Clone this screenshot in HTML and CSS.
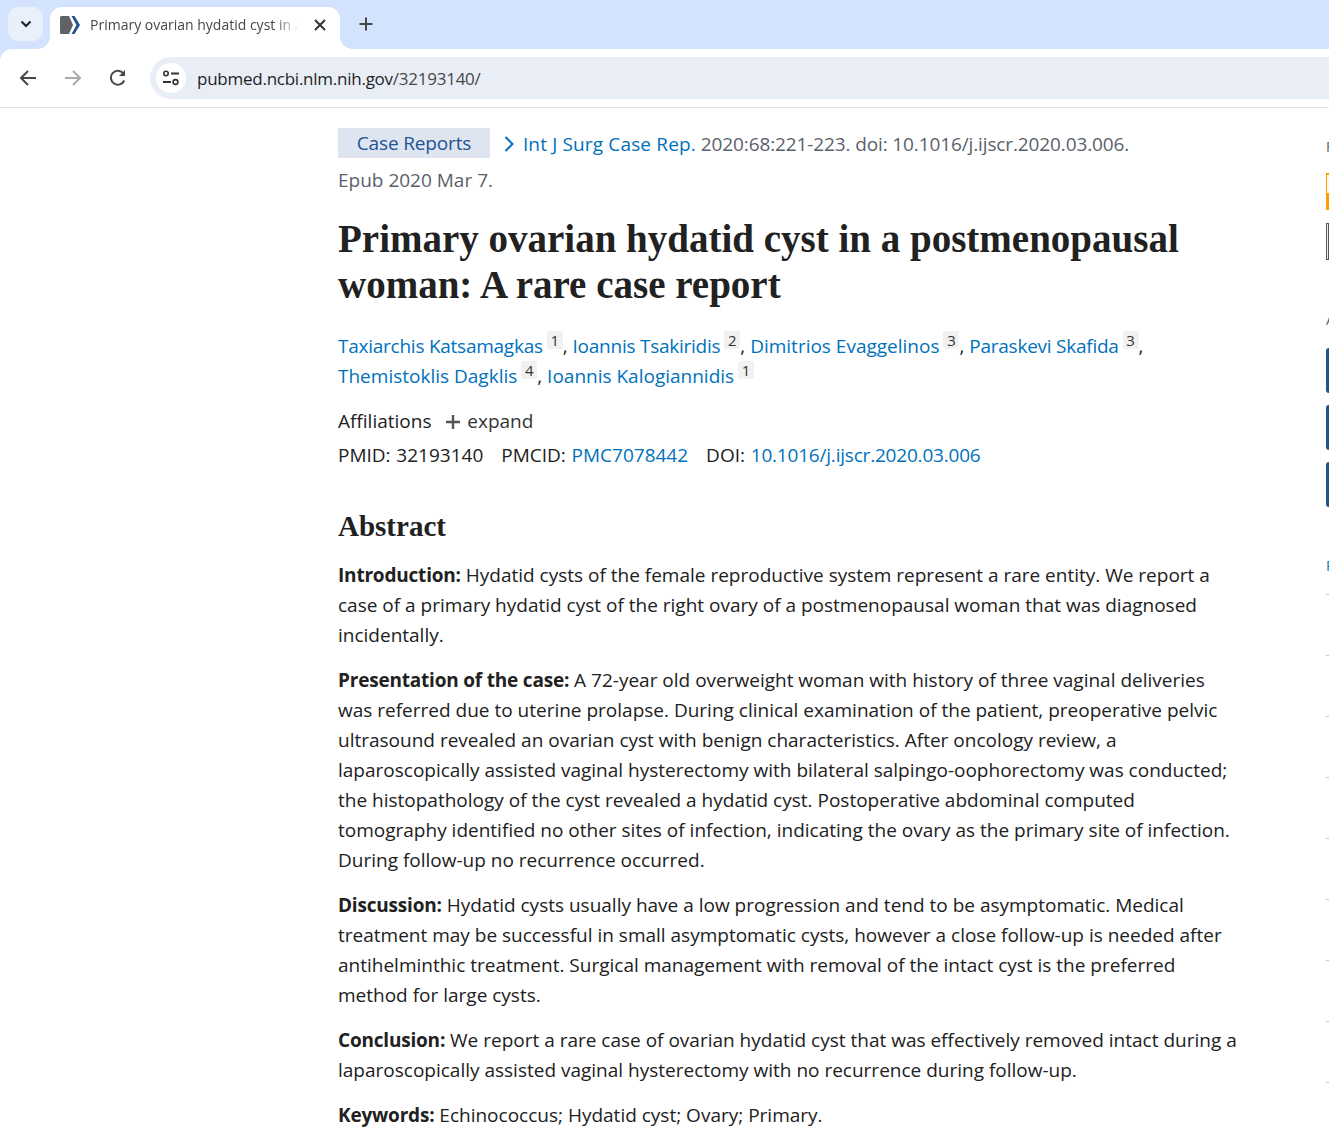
FILE: index.html
```html
<!DOCTYPE html>
<html lang="en">
<head>
  <meta charset="UTF-8">
  <title>Primary ovarian hydatid cyst in a postmenopausal woman</title>
  <link rel="stylesheet" href="styles.css">
</head>
<body>
  <div class="chrome">
    <div class="tabstrip">
      <div class="tab-search">
        <svg width="14" height="14" viewBox="0 0 14 14"><path d="M2.500 4.500 7 9l4.500-4.500" fill="none" stroke="#1f1f1f" stroke-width="2"/></svg>
      </div>
      <div class="tab">
        <svg class="favicon" width="20" height="20" viewBox="0 0 20 20">
          <path d="M0 2.500A1.500 1.500 0 0 1 1.500 1H9l4 9-4 9H1.500A1.500 1.500 0 0 1 0 17.500z" fill="#5f6368"/>
          <path d="M11.500 1h3L20 10l-5.500 9h-3l5-9z" fill="#20558a"/>
        </svg>
        <span class="tab-title">Primary ovarian hydatid cyst in a</span>
        <svg class="tab-close" width="14" height="14" viewBox="0 0 14 14"><path d="M2 2l10 10M12 2 2 12" stroke="#333" stroke-width="2"/></svg>
      </div>
      <svg class="new-tab" width="16" height="16" viewBox="0 0 16 16"><path d="M8 1.500v13M1.500 8h13" stroke="#474747" stroke-width="2"/></svg>
    </div>

    <div class="toolbar">
      <svg class="nav" width="20" height="20" viewBox="0 0 20 20"><path d="M18 10H3M10 3l-7 7 7 7" fill="none" stroke="#474747" stroke-width="2"/></svg>
      <svg class="nav" width="20" height="20" viewBox="0 0 20 20"><path d="M2 10h15M10 3l7 7-7 7" fill="none" stroke="#a9abad" stroke-width="2"/></svg>
      <svg class="nav" width="20" height="20" viewBox="0 0 20 20"><path d="M16.300 12.500A7 7 0 1 1 15.500 5.500" fill="none" stroke="#474747" stroke-width="2"/><path d="M17 2v6h-6z" fill="#474747"/></svg>
      <div class="omnibox">
        <div class="site-info">
          <svg width="18" height="18" viewBox="0 0 18 18">
            <circle cx="4" cy="4.500" r="2.200" fill="none" stroke="#333" stroke-width="1.600"/>
            <path d="M9 4.500h8M1 13h8" stroke="#333" stroke-width="1.800"/>
            <circle cx="13.500" cy="13" r="2.400" fill="none" stroke="#333" stroke-width="1.600"/>
          </svg>
        </div>
        <span class="url">pubmed.ncbi.nlm.nih.gov<span class="url-path">/32193140/</span></span>
      </div>
    </div>
  </div>

  <div class="page">
    <main class="article">
      <div class="cit">
        <span class="pub-type">Case Reports</span>
        <svg class="cit-arrow" width="12" height="16" viewBox="0 0 12 16"><path d="M2.500 1 9.500 8l-7 7" fill="none" stroke="#0071bc" stroke-width="2"/></svg>
        <a class="journal">Int J Surg Case Rep.</a> <span class="cit-detail">2020:68:221-223. doi: 10.1016/j.ijscr.2020.03.006.</span><br>
        Epub 2020 Mar 7.
      </div>

      <h1 class="heading-title">Primary ovarian hydatid cyst in a postmenopausal<br>woman: A rare case report</h1>

      <div class="authors">
        <a class="tight">Taxiarchis Katsamagkas</a> <sup>1</sup>, <a class="tight">Ioannis Tsakiridis</a> <sup>2</sup>, <a>Dimitrios Evaggelinos</a> <sup>3</sup>, <a class="tight">Paraskevi Skafida</a> <sup>3</sup>,<br>
        <a>Themistoklis Dagklis</a> <sup>4</sup>, <a>Ioannis Kalogiannidis</a> <sup>1</sup>
      </div>

      <div class="affiliations">
        Affiliations
        <svg class="plus" width="16" height="16" viewBox="0 0 16 16"><path d="M8 1v14M1 8h14" stroke="#555" stroke-width="2.400"/></svg>
        <span class="expand">expand</span>
      </div>

      <ul class="identifiers">
        <li>PMID: 32193140</li>
        <li>PMCID: <a>PMC7078442</a></li>
        <li>DOI: <a class="doi">10.1016/j.ijscr.2020.03.006</a></li>
      </ul>

      <h2 class="abstract-title">Abstract</h2>

      <p><strong>Introduction:</strong> Hydatid cysts of the female reproductive system represent a rare entity. We report a<br>
      case of a primary hydatid cyst of the right ovary of a postmenopausal woman that was diagnosed<br>
      incidentally.</p>

      <p><strong>Presentation of the case:</strong> A 72-year old overweight woman with history of three vaginal deliveries<br>
      was referred due to uterine prolapse. During clinical examination of the patient, preoperative pelvic<br>
      ultrasound revealed an ovarian cyst with benign characteristics. After oncology review, a<br>
      laparoscopically assisted vaginal hysterectomy with bilateral salpingo-oophorectomy was conducted;<br>
      the histopathology of the cyst revealed a hydatid cyst. Postoperative abdominal computed<br>
      tomography identified no other sites of infection, indicating the ovary as the primary site of infection.<br>
      During follow-up no recurrence occurred.</p>

      <p><strong>Discussion:</strong> Hydatid cysts usually have a low progression and tend to be asymptomatic. Medical<br>
      treatment may be successful in small asymptomatic cysts, however a close follow-up is needed after<br>
      antihelminthic treatment. Surgical management with removal of the intact cyst is the preferred<br>
      method for large cysts.</p>

      <p><strong>Conclusion:</strong> We report a rare case of ovarian hydatid cyst that was effectively removed intact during a<br>
      laparoscopically assisted vaginal hysterectomy with no recurrence during follow-up.</p>

      <p><strong>Keywords:</strong> Echinococcus; Hydatid cyst; Ovary; Primary.</p>
    </main>

    <aside class="sidebar">
      <div class="side-title">Full text links</div>
      <div class="side-orange"><div class="side-orange-inner"></div></div>
      <div class="side-gray"></div>
      <div class="side-title side-actions">Actions</div>
      <div class="side-blue"></div>
      <div class="side-blue"></div>
      <div class="side-blue"></div>
      <div class="side-title side-nav">Page navigation</div>
      <div class="side-rule"></div>
      <div class="side-rule"></div>
      <div class="side-rule"></div>
      <div class="side-rule"></div>
      <div class="side-rule"></div>
      <div class="side-rule"></div>
      <div class="side-rule"></div>
      <div class="side-rule"></div>
      <div class="side-rule"></div>
    </aside>
  </div>
</body>
</html>
```

FILE: styles.css
```css
html, body {
  height: 100%;
}

body {
  margin: 0;
  background-color: #fff;
  overflow: hidden;
  font-family: "Open Sans", "Noto Sans", sans-serif;
  color: #212121;
}

/* browser chrome */
.chrome {
  background-color: #d3e3fd;
}

.tabstrip {
  display: flex;
  align-items: flex-end;
  height: 49px;
  padding-left: 8px;
  box-sizing: border-box;
}

.tab-search {
  display: flex;
  justify-content: center;
  align-items: center;
  width: 35px;
  height: 34px;
  margin-right: 7px;
  margin-bottom: 8px;
  border-radius: 10px;
  background-color: #e9f0fc;
}

.tab {
  position: relative;
  display: flex;
  align-items: center;
  width: 290px;
  height: 42px;
  padding: 0 13px 7px 10px;
  box-sizing: border-box;
  background-color: #fff;
  border-radius: 12px 12px 0 0;
}

/* the little curves where the tab meets the toolbar */
.tab::before,
.tab::after {
  content: "";
  position: absolute;
  bottom: 0;
  width: 12px;
  height: 12px;
}

.tab::before {
  left: -12px;
  background: radial-gradient(circle at 0 0, transparent 11.500px, #fff 12px);
}

.tab::after {
  right: -12px;
  background: radial-gradient(circle at 100% 0, transparent 11.500px, #fff 12px);
}

.favicon {
  flex: none;
  margin-right: 10px;
}

.tab-title {
  flex: 1;
  overflow: hidden;
  white-space: nowrap;
  font-size: 14px;
  color: #45474a;
  -webkit-mask-image: linear-gradient(90deg, #000 88%, transparent 100%);
  mask-image: linear-gradient(90deg, #000 88%, transparent 100%);
}

.tab-close {
  flex: none;
  margin-left: 14px;
}

.new-tab {
  margin: 0 0 17px 18px;
}

.toolbar {
  display: flex;
  align-items: center;
  height: 59px;
  padding-left: 18px;
  box-sizing: border-box;
  background-color: #fff;
  border-bottom: 1px solid #e3e3e3;
  border-top-left-radius: 12px;
}

.nav {
  flex: none;
  margin-right: 25px;
}

.nav:nth-child(3) {
  margin-right: 22px;
}

.omnibox {
  display: flex;
  flex: 1;
  align-items: center;
  height: 42px;
  padding-left: 6px;
  border-radius: 21px 0 0 21px;
  background-color: #e9eef6;
}

.site-info {
  display: flex;
  justify-content: center;
  align-items: center;
  width: 30px;
  height: 30px;
  margin-right: 11px;
  border-radius: 50%;
  background-color: #fff;
}

.url {
  font-size: 17px;
  letter-spacing: -0.25px;
  color: #1f1f1f;
}

.url-path {
  color: #474747;
}

/* page */
.page {
  display: flex;
  justify-content: space-between;
  padding-left: 338px;
}

.article {
  width: 960px;
  padding-top: 18px;
  font-size: 19px;
  white-space: nowrap;
}

.article a {
  color: #0071bc;
}

.cit {
  line-height: 36px;
  color: #5b616b;
}

.pub-type {
  display: inline-block;
  width: 152px;
  height: 30px;
  margin-top: 2px;
  margin-right: 8px;
  line-height: 31px;
  letter-spacing: -0.15px;
  text-align: center;
  vertical-align: top;
  background-color: #dfe5f0;
  color: #205493;
}

.cit-arrow {
  margin-right: 3px;
  vertical-align: -1px;
}

.journal {
  letter-spacing: 0.15px;
}

.cit-detail {
  letter-spacing: -0.12px;
}

.heading-title {
  margin: 18px 0 0;
  font-family: "Liberation Serif", serif;
  font-size: 39px;
  font-weight: 700;
  line-height: 46px;
  color: #212121;
}

.authors {
  margin-top: 23px;
  line-height: 30px;
}

.tight {
  letter-spacing: -0.25px;
}

.authors sup {
  display: inline-block;
  min-width: 16px;
  height: 18px;
  margin-left: -1px;
  border-radius: 2px;
  background-color: #f1f1f1;
  font-size: 15px;
  line-height: 18px;
  text-align: center;
  vertical-align: 7px;
  color: #333;
}

.affiliations {
  margin-top: 15px;
  line-height: 30px;
}

.plus {
  margin: 0 1px 0 9px;
  vertical-align: -2px;
}

.expand {
  color: #333;
}

.identifiers {
  display: flex;
  gap: 18px;
  margin: 4px 0 0;
  padding: 0;
  list-style: none;
  line-height: 30px;
  word-spacing: 0.8px;
}

.doi {
  letter-spacing: -0.2px;
}

.abstract-title {
  margin: 38px 0 0;
  font-family: "Liberation Serif", serif;
  font-size: 29px;
  font-weight: 700;
  line-height: 36px;
}

.article p {
  margin: 15px 0 0;
  line-height: 30px;
}

.abstract-title + p {
  margin-top: 16px;
}

.article strong {
  font-weight: 700;
  letter-spacing: -0.2px;
}

/* sidebar, mostly cut off by the window edge */
.sidebar {
  display: flex;
  flex-direction: column;
  flex: none;
  width: 3px;
  overflow: hidden;
}

.side-title {
  margin-top: 30px;
  font-size: 14px;
  line-height: 18px;
  white-space: nowrap;
  color: #5b616b;
}

.side-orange {
  height: 37px;
  margin-top: 17px;
  padding: 2px 0 0 1px;
  box-sizing: border-box;
  background-color: #ff9d00;
}

.side-orange-inner {
  height: 18px;
  background-color: #fff6e6;
}

.side-gray {
  height: 37px;
  margin-top: 13px;
  box-sizing: border-box;
  border: 1px solid #555;
  background-color: #eee;
}

.side-actions {
  margin-top: 51px;
}

.side-blue {
  height: 45px;
  margin-top: 12px;
  border-radius: 5px 0 0 5px;
  background-color: #20558a;
}

.side-actions + .side-blue {
  margin-top: 19px;
}

.side-nav {
  margin-top: 50px;
  color: #0071bc;
}

.side-rule {
  height: 1px;
  margin-top: 60px;
  background-color: #c8c8c8;
}

.side-nav + .side-rule {
  margin-top: 19px;
}
```
